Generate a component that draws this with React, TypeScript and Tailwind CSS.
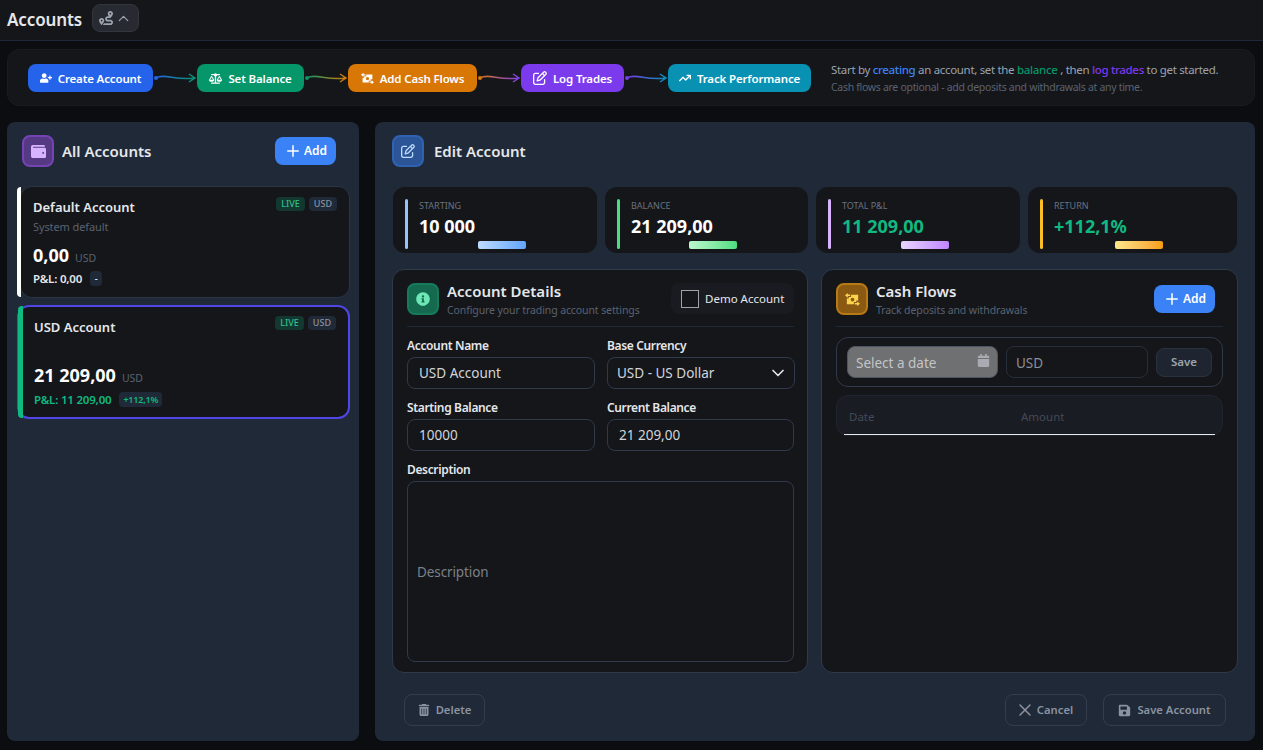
import React from 'react';
import { Plus, X, ChevronUp, ChevronDown } from 'lucide-react';
import { FaUserPlus, FaWallet, FaInfoCircle, FaCalendar, FaSave, FaRoute } from 'react-icons/fa';
import { FaArrowTrendUp, FaRegPenToSquare, FaScaleBalanced, FaTrashCan } from 'react-icons/fa6';

const MoneyIcon: React.FC<{ size: number }> = ({ size }) => (
  <svg width={size} height={size} viewBox="0 0 16 14" fill="currentColor">
    <path fillRule="evenodd" d="M6.5 2H14V8H12V9.7H9.5V12H2V6H4V4.3H6.5ZM6 7a2 2 0 1 0 4 0a2 2 0 1 0 -4 0Z" />
    <path d="M0 2.5L3 0V1.7H5.5V3.3H3V5Z" />
    <path d="M16 11.5L13 9V10.7H10.5V12.3H13V14Z" />
  </svg>
);

const Connector: React.FC<{ id: string; from: string; to: string }> = ({ id, from, to }) => (
  <svg width="44" height="28" viewBox="0 0 44 28" className="shrink-0">
    <defs>
      <linearGradient id={id} x1="0" x2="44" y1="0" y2="0" gradientUnits="userSpaceOnUse">
        <stop offset="0%" stopColor={from} />
        <stop offset="100%" stopColor={to} />
      </linearGradient>
    </defs>
    <circle cx="3" cy="14" r="2" fill={from} />
    <path d="M3 14 C12 9, 22 17, 42 14 M36 10 L42 14 L36 18" fill="none" stroke={`url(#${id})`} strokeWidth="1.5" />
  </svg>
);

const StepButton: React.FC<{ icon: React.ReactNode; label: string; className: string }> = ({ icon, label, className }) => (
  <div className={`h-7 flex items-center justify-center gap-[6px] rounded-lg text-[11.5px] tracking-[-0.15px] font-semibold text-white shrink-0 ${className}`}>
    {icon}
    <span className="mt-[1px]">{label}</span>
  </div>
);

const Stat: React.FC<{ label: string; value: string; width: string; bar: string; barGrad: string; valueColor?: string }> = ({ label, value, width, bar, barGrad, valueColor }) => (
  <div className={`relative h-[66px] rounded-xl bg-[#14161a] flex pl-[12px] pt-[12px] ${width}`}>
    <div className={`w-[3px] h-[50px] rounded-full ${bar}`} />
    <div className="ml-[11px]">
      <div className="text-[9px] leading-[14px] text-[#6b7280] uppercase">{label}</div>
      <div className={`text-[18px] leading-[26px] font-bold ${valueColor ?? 'text-white'}`}>{value}</div>
    </div>
    <div className={`absolute bottom-[4px] w-[48px] h-[8px] rounded-[2px] ${barGrad}`} />
  </div>
);

const Tag: React.FC<{ children: React.ReactNode; className: string }> = ({ children, className }) => (
  <span className={`h-[14px] px-[5px] flex items-center rounded text-[9px] font-medium ${className}`}>{children}</span>
);

const Field: React.FC<{ label: string; value: string; w: string; chevron?: boolean }> = ({ label, value, w, chevron }) => (
  <div className={`shrink-0 ${w}`}>
    <div className="text-[12px] leading-[16px] font-semibold tracking-[-0.35px] text-[#e5e7eb] mb-[3px]">{label}</div>
    <div className={`h-8 rounded-lg border border-[#2f3a4b] bg-[#14161a] flex items-center justify-between pr-[6px] text-[13.5px] text-[#d1d5db] ${chevron ? 'pl-[9px]' : 'pl-[11px]'}`}>
      <span>{value}</span>
      {chevron && <ChevronDown size={20} className="text-[#e5e7eb]" />}
    </div>
  </div>
);

const AddButton: React.FC<{ className?: string }> = ({ className }) => (
  <div className={`w-[61px] h-7 rounded-lg bg-[#3b82f6] flex items-center justify-center gap-[2px] text-[12px] font-semibold ${className ?? ''}`}>
    <Plus size={18} />
    Add
  </div>
);

export default function App() {
  return (
    <div className="w-[1263px] h-[750px] overflow-hidden bg-[#0b0d10] text-white font-['Noto_Sans',sans-serif]">
      {/* top bar */}
      <div className="h-[41px] bg-[#14161a] border-b border-[#1e2a3b] flex items-center pl-[7px] pb-[4px]">
        <h1 className="text-[17px] font-semibold tracking-[-0.1px] text-[#e5e7eb] mt-[3px]">Accounts</h1>
        <div className="ml-[10px] w-[47px] h-7 rounded-lg bg-[#272a30] border border-[#33363d] flex items-center justify-center gap-[2px] text-[#9ca3af]">
          <FaRoute size={14} />
          <ChevronUp size={17} strokeWidth={1.75} />
        </div>
      </div>

      {/* workflow banner */}
      <div className="mx-[7px] mt-[8px] h-[57px] w-[1248px] rounded-xl bg-[#14161a] border border-[#191b20] flex items-center pl-[20px] pt-[1px]">
        <StepButton className="w-[125px] bg-[#2563eb]" icon={<FaUserPlus size={12} />} label="Create Account" />
        <Connector id="c1" from="#2563eb" to="#059669" />
        <StepButton className="w-[107px] bg-[#059669]" icon={<FaScaleBalanced size={13} />} label="Set Balance" />
        <Connector id="c2" from="#059669" to="#d97706" />
        <StepButton className="w-[129px] bg-[#d97706]" icon={<MoneyIcon size={13} />} label="Add Cash Flows" />
        <Connector id="c3" from="#d97706" to="#7c3aed" />
        <StepButton className="w-[103px] bg-[#7c3aed]" icon={<FaRegPenToSquare size={14} />} label="Log Trades" />
        <Connector id="c4" from="#7c3aed" to="#0891b2" />
        <StepButton className="w-[143px] bg-[#0891b2]" icon={<FaArrowTrendUp size={12} />} label="Track Performance" />
        <div className="ml-[20px] mt-[1px] shrink-0">
          <div className="text-[11.5px] leading-[18px] tracking-[-0.32px] text-[#9ca3af] whitespace-nowrap">
            Start by <span className="text-[#3b82f6] font-medium">creating</span> an account, set the{' '}
            <span className="text-[#059669] font-medium">balance</span> , then{' '}
            <span className="text-[#7c3aed] font-medium">log trades</span> to get started.
          </div>
          <div className="text-[10.5px] leading-[17px] tracking-[-0.3px] text-[#5b6270] whitespace-nowrap">Cash flows are optional - add deposits and withdrawals at any time.</div>
        </div>
      </div>

      <div className="flex gap-4 mx-[7px] mt-[16px] h-[619px]">
        {/* accounts list */}
        <div className="w-[352px] shrink-0 rounded-lg bg-[#1f2937] pl-[10px] pr-[9px] pt-[13px]">
          <div className="flex items-center pl-[5px] pr-[14px]">
            <div className="w-8 h-8 rounded-lg bg-[#553a83] border-2 border-[#7543b5] flex items-center justify-center text-[#d8b4fe]">
              <FaWallet size={15} />
            </div>
            <span className="ml-[8px] text-[15px] font-semibold text-[#e5e7eb] mt-[1px]">All Accounts</span>
            <AddButton className="ml-auto" />
          </div>

          <div className="mt-[19px] relative h-[112px] rounded-xl bg-[#14161a] border border-[#2b3546] ml-[3px] pl-[12px] pr-[12px] pt-[10px]">
            <div className="absolute left-[-4px] top-0 bottom-0 w-[4px] rounded-l-sm bg-white" />
            <div className="flex justify-between">
              <div className="text-[13px] leading-[21px] font-semibold text-[#e5e7eb]">Default Account</div>
              <div className="flex gap-[4px]">
                <Tag className="bg-[#12382f] text-[#34c08f]">LIVE</Tag>
                <Tag className="bg-[#1f2937] text-[#8b93a1]">USD</Tag>
              </div>
            </div>
            <div className="text-[11px] leading-[16px] tracking-[-0.1px] mt-[1px] text-[#5b6270]">System default</div>
            <div className="flex items-baseline gap-[6px] mt-[7px] h-[26px]">
              <span className="text-[18px] font-bold">0,00</span>
              <span className="text-[10.5px] text-[#5b6270]">USD</span>
            </div>
            <div className="flex items-center gap-[8px] mt-[2px] text-[11.5px] tracking-[-0.2px] font-semibold text-[#e5e7eb]">
              <span>P&amp;L: 0,00</span>
              <span className="w-3 h-[15px] rounded bg-[#1f2937] flex items-center justify-center text-[9px]">-</span>
            </div>
          </div>

          <div className="mt-[7px] relative h-[114px] rounded-xl bg-[#14161a] border-2 border-[#4f46e5] pl-[15px] pr-[12px] pt-[10px]">
            <div className="absolute left-[-1px] top-[-1px] bottom-[-1px] w-[5px] rounded-l-sm bg-[#10b981]" />
            <div className="flex justify-between">
              <div className="text-[13px] leading-[21px] font-semibold text-[#e5e7eb]">USD Account</div>
              <div className="flex gap-[4px] -mt-[1px]">
                <Tag className="bg-[#12382f] text-[#34c08f]">LIVE</Tag>
                <Tag className="bg-[#1f2937] text-[#8b93a1]">USD</Tag>
              </div>
            </div>
            <div className="flex items-baseline gap-[6px] mt-[24px] h-[26px]">
              <span className="text-[18px] font-bold">21 209,00</span>
              <span className="text-[10.5px] text-[#5b6270]">USD</span>
            </div>
            <div className="flex items-center gap-[8px] mt-[3px] text-[11.5px] tracking-[-0.2px] font-semibold text-[#10b981]">
              <span>P&amp;L: 11 209,00</span>
              <span className="h-[15px] px-[4px] rounded bg-[#1f2937] flex items-center text-[9px]">+112,1%</span>
            </div>
          </div>
        </div>

        {/* edit panel */}
        <div className="w-[880px] shrink-0 rounded-lg bg-[#1f2937] pl-[18px] pr-[18px] pt-[13px]">
          <div className="flex items-center -ml-[1px]">
            <div className="w-8 h-8 rounded-lg bg-[#2b5597] border-2 border-[#2f62b3] flex items-center justify-center text-[#bfdbfe]">
              <FaRegPenToSquare size={14} />
            </div>
            <span className="ml-[10px] text-[15px] font-semibold text-[#e5e7eb] mt-[1px]">Edit Account</span>
          </div>

          <div className="flex gap-2 mt-[20px]">
            <Stat label="Starting" value="10 000" width="w-[204px]" bar="bg-[#93c5fd]" barGrad="left-[85px] bg-gradient-to-r from-[#bfdbfe] to-[#60a5fa]" />
            <Stat label="Balance" value="21 209,00" width="w-[203px]" bar="bg-[#4ade80]" barGrad="left-[84px] bg-gradient-to-r from-[#bbf7d0] to-[#4ade80]" />
            <Stat label="Total P&L" value="11 209,00" width="w-[204px]" bar="bg-[#d8b4fe]" barGrad="left-[85px] bg-gradient-to-r from-[#e9d5ff] to-[#c084fc]" valueColor="text-[#10b981]" />
            <Stat label="Return" value="+112,1%" width="w-[209px]" bar="bg-[#fbbf24]" barGrad="left-[87px] bg-gradient-to-r from-[#fde68a] to-[#f59e0b]" valueColor="text-[#10b981]" />
          </div>

          <div className="flex gap-[13px] mt-[16px] -ml-[1px] h-[404px]">
            {/* account details */}
            <div className="w-[416px] rounded-xl bg-[#14161a] border border-[#2f3a4b] pl-[14px] pr-[13px] pt-[13px]">
              <div className="flex items-start h-[44px] border-b border-[#1f2937]">
                <div className="w-8 h-8 rounded-lg bg-[#14694f] border-2 border-[#167a5b] flex items-center justify-center text-[#6ee7b7]">
                  <FaInfoCircle size={14} />
                </div>
                <div className="ml-[8px] -mt-[2px]">
                  <div className="text-[15px] leading-[20px] font-semibold text-[#e5e7eb]">Account Details</div>
                  <div className="text-[10.5px] leading-[16px] mt-[1px] tracking-[-0.1px] text-[#5b6270]">Configure your trading account settings</div>
                </div>
                <div className="ml-auto w-[123px] h-[31px] rounded-lg bg-[#191b20] flex items-center pl-[10px] gap-[6px] text-[11.5px] text-[#e5e7eb]">
                  <div className="w-[18px] h-[18px] border border-[#9ca3af] bg-[#14161a]" />
                  Demo Account
                </div>
              </div>
              <div className="flex gap-[12px] mt-[11px]">
                <Field label="Account Name" value="USD Account" w="w-[188px]" />
                <Field label="Base Currency" value="USD - US Dollar" w="w-[188px]" chevron />
              </div>
              <div className="flex gap-[12px] mt-[11px]">
                <Field label="Starting Balance" value="10000" w="w-[188px]" />
                <Field label="Current Balance" value="21 209,00" w="w-[187px]" />
              </div>
              <div className="mt-[11px] w-[387px]">
                <div className="text-[12px] leading-[16px] font-semibold tracking-[-0.35px] text-[#e5e7eb] mb-[3px]">Description</div>
                <div className="h-[181px] rounded-lg border border-[#2f3a4b] flex items-center pl-[9px] pt-[2px] text-[13.5px] tracking-[-0.1px] text-[#7d8188]">Description</div>
              </div>
            </div>

            {/* cash flows */}
            <div className="w-[417px] rounded-xl bg-[#14161a] border border-[#2f3a4b] px-[14px] pt-[13px]">
              <div className="flex items-start h-[44px] border-b border-[#1f2937]">
                <div className="w-8 h-8 rounded-lg bg-[#8a5a12] border-2 border-[#b77a14] flex items-center justify-center text-[#fcd34d]">
                  <MoneyIcon size={15} />
                </div>
                <div className="ml-[8px] -mt-[2px]">
                  <div className="text-[15px] leading-[20px] font-semibold text-[#e5e7eb]">Cash Flows</div>
                  <div className="text-[10.5px] leading-[16px] mt-[1px] tracking-[-0.1px] text-[#5b6270]">Track deposits and withdrawals</div>
                </div>
                <AddButton className="ml-auto mr-[8px] mt-[2px]" />
              </div>
              <div className="mt-[10px] h-[50px] rounded-xl border border-[#2f3a4b] flex items-center pl-[10px] pr-[10px]">
                <div className="w-[151px] h-8 rounded-lg bg-[#6f7072] border border-[#4b5563] flex items-center justify-between pl-[8px] pr-[7px] text-[13.5px] text-[#c4c5c7]">
                  <span className="mt-[3px]">Select a date</span>
                  <FaCalendar size={13} className="text-[#a8abb2] -mt-[3px]" />
                </div>
                <div className="ml-[8px] w-[142px] h-8 rounded-lg border border-[#262e3b] flex items-center pl-[9px] text-[13.5px] text-[#8b8f96]">
                  <span className="mt-[2px]">USD</span>
                </div>
                <div className="ml-[8px] w-[56px] h-[29px] rounded-lg bg-[#1f2530] border border-[#2a3240] flex items-center justify-center text-[11.5px] font-semibold text-[#9ca3af]">Save</div>
              </div>
              <div className="mt-[8px] h-[41px] rounded-xl bg-[#191c23] border border-[#1f2530] relative flex items-center pl-[12px] text-[11.5px] text-[#434a57]">
                <span className="w-[172px] mt-[2px]">Date</span>
                <span className="mt-[2px]">Amount</span>
                <div className="absolute left-[7px] right-[7px] bottom-0 h-[1px] bg-[#e5e7eb]" />
              </div>
            </div>
          </div>

          {/* footer actions */}
          <div className="flex items-center mt-[21px] ml-[11px] mr-[11px] text-[11.25px] font-semibold text-[#8b93a1]">
            <div className="w-[81px] h-8 rounded-lg border border-[#333d4d] flex items-center justify-center gap-[6px]">
              <FaTrashCan size={12} />
              <span className="mt-[1px]">Delete</span>
            </div>
            <div className="ml-auto w-[82px] h-8 rounded-lg border border-[#333d4d] flex items-center justify-center gap-[2px] pr-[4px]">
              <X size={20} strokeWidth={1.75} />
              <span className="mt-[1px]">Cancel</span>
            </div>
            <div className="ml-[16px] w-[123px] h-8 rounded-lg border border-[#333d4d] flex items-center justify-center gap-[6px]">
              <FaSave size={13} />
              <span className="mt-[1px]">Save Account</span>
            </div>
          </div>
        </div>
      </div>
    </div>
  );
}
